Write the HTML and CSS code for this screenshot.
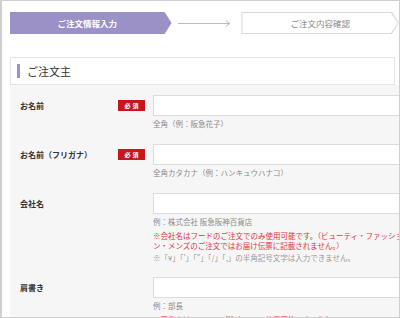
FILE: index.html
```html
<!DOCTYPE html>
<html lang="ja">
<head>
    <meta charset="UTF-8">
    <meta name="viewport" content="width=device-width, initial-scale=1.0">
    <title>ご注文情報入力</title>
    <link rel="stylesheet" href="styles.css">
</head>
<body>
    <div class="frame">
        <div class="steps">
            <div class="step step-current">ご注文情報入力</div>
            <svg class="step-line" width="56" height="10" viewBox="0 0 56 10">
                <path d="M0 5.5H52M48 2.5L52 5.5L48 8.5" fill="none" stroke="#bbb" stroke-width="1"/>
            </svg>
            <div class="step step-next"><span>ご注文内容確認</span></div>
        </div>

        <div class="section-head">
            <span class="section-bar"></span>
            <h2>ご注文主</h2>
        </div>

        <div class="form-body">
            <div class="form-row">
                <div class="label">お名前</div>
                <div class="badge-col"><span class="badge">必須</span></div>
                <div class="field">
                    <input type="text" class="text-input">
                    <p class="hint">全角（例：阪急花子）</p>
                </div>
            </div>

            <div class="form-row">
                <div class="label">お名前（フリガナ）</div>
                <div class="badge-col"><span class="badge">必須</span></div>
                <div class="field">
                    <input type="text" class="text-input">
                    <p class="hint">全角カタカナ（例：ハンキュウハナコ）</p>
                </div>
            </div>

            <div class="form-row">
                <div class="label">会社名</div>
                <div class="badge-col"></div>
                <div class="field">
                    <input type="text" class="text-input">
                    <p class="hint">例：株式会社 阪急阪神百貨店</p>
                    <p class="note-red">※会社名はフードのご注文でのみ使用可能です。（ビューティ・ファッショ<br>ン・メンズのご注文ではお届け伝票に記載されません。）</p>
                    <p class="note-grey">※「¥」「'」「"」「/」「,」の半角記号文字は入力できません。</p>
                </div>
            </div>

            <div class="form-row">
                <div class="label">肩書き</div>
                <div class="badge-col"></div>
                <div class="field">
                    <input type="text" class="text-input">
                    <p class="hint">例：部長</p>
                    <p class="note-red">※肩書きはフードのご注文でのみ使用可能です。（ビューティ・ファッショ</p>
                </div>
            </div>
        </div>
    </div>
</body>
</html>
```

FILE: styles.css
```css
html, body {
    margin: 0;
    padding: 0;
}

body {
    font-family: "Noto Sans CJK JP", "Noto Sans", sans-serif;
    background-color: #fff;
    color: #333;
}

.frame {
    box-sizing: border-box;
    width: 400px;
    height: 318px;
    border: 1px solid #cfcfcf;
    border-left-width: 2px;
    padding: 11px 0 0 8px;
    overflow: hidden;
}

/* steps */
.steps {
    display: flex;
    align-items: center;
    height: 22px;
}

.step {
    box-sizing: border-box;
    height: 22px;
    font-size: 8.5px;
    line-height: 22px;
    text-align: center;
    clip-path: polygon(0 0, calc(100% - 7px) 0, 100% 50%, calc(100% - 7px) 100%, 0 100%);
}

.step-current {
    width: 162px;
    padding-right: 7px;
    background-color: #9c91c6;
    color: #fff;
    font-weight: bold;
}

.step-line {
    margin: 0 8px 0 6px;
}

.step-next {
    width: 158px;
    padding: 1px;
    background-color: #d9d9d9;
}

.step-next span {
    display: block;
    height: 20px;
    line-height: 20px;
    background-color: #fff;
    color: #888;
    clip-path: polygon(0 0, calc(100% - 7px) 0, 100% 50%, calc(100% - 7px) 100%, 0 100%);
}

/* section header */
.section-head {
    box-sizing: border-box;
    display: flex;
    align-items: center;
    gap: 7px;
    width: 385px;
    height: 28px;
    margin-top: 23px;
    padding-left: 6px;
    background-color: #fff;
    border: 1px solid #e4e4e4;
}

.section-bar {
    width: 3px;
    height: 14px;
    background-color: #9c91c6;
}

.section-head h2 {
    margin: 0;
    font-size: 11px;
    font-weight: normal;
    color: #333;
}

/* form */
.form-body {
    background-color: #f6f6f6;
    padding: 10px 0 20px 10px;
}

.form-row {
    display: flex;
    align-items: flex-start;
    margin-bottom: 14px;
}

.label {
    width: 98px;
    line-height: 21px;
    font-size: 8px;
    font-weight: bold;
    color: #333;
    white-space: nowrap;
}

.badge-col {
    width: 35px;
    height: 21px;
    display: flex;
    align-items: center;
}

.badge {
    display: block;
    width: 27px;
    height: 11px;
    background-color: #c9161d;
    color: #fff;
    font-size: 6px;
    font-weight: bold;
    line-height: 11px;
    text-align: center;
    letter-spacing: 2px;
    text-indent: 2px;
}

.field {
    flex: 1;
    min-width: 0;
}

.text-input {
    display: block;
    box-sizing: border-box;
    width: 260px;
    height: 21px;
    margin: 0;
    border: 1px solid #dcdcdc;
    background-color: #fff;
}

.hint,
.note-red,
.note-grey {
    margin: 0;
    font-size: 7.5px;
    white-space: nowrap;
}

.hint {
    margin-top: 2px;
    line-height: 12px;
    color: #8a8a8a;
}

.note-red {
    margin-top: 3px;
    line-height: 10px;
    color: #e2323a;
}

.note-grey {
    margin-top: 1px;
    line-height: 11px;
    color: #9a9a9a;
}
```
